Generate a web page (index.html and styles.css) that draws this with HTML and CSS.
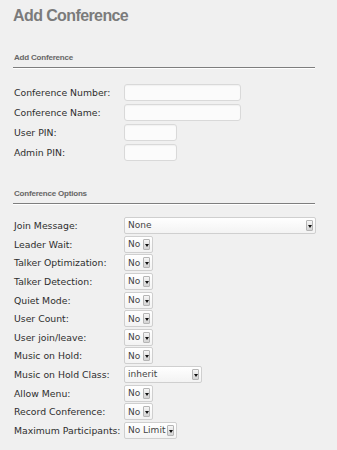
FILE: index.html
```html
<!DOCTYPE html>
<html>
<head>
<meta charset="utf-8">
<link rel="stylesheet" href="styles.css">
</head>
<body>
<div class="page">
  <h1 class="title">Add Conference</h1>

  <h2 class="section">Add Conference</h2>
  <div class="form top">
    <div class="row"><span class="lbl">Conference Number:</span><span class="inp wide"></span></div>
    <div class="row"><span class="lbl">Conference Name:</span><span class="inp wide"></span></div>
    <div class="row"><span class="lbl">User PIN:</span><span class="inp short"></span></div>
    <div class="row"><span class="lbl">Admin PIN:</span><span class="inp short"></span></div>
  </div>

  <h2 class="section">Conference Options</h2>
  <div class="form opts">
    <div class="row"><span class="lbl">Join Message:</span><div class="sel full"><span class="val">None</span><i class="arr"></i></div></div>
    <div class="row"><span class="lbl">Leader Wait:</span><div class="sel no"><span class="val">No</span><i class="arr"></i></div></div>
    <div class="row"><span class="lbl">Talker Optimization:</span><div class="sel no"><span class="val">No</span><i class="arr"></i></div></div>
    <div class="row"><span class="lbl">Talker Detection:</span><div class="sel no"><span class="val">No</span><i class="arr"></i></div></div>
    <div class="row"><span class="lbl">Quiet Mode:</span><div class="sel no"><span class="val">No</span><i class="arr"></i></div></div>
    <div class="row"><span class="lbl">User Count:</span><div class="sel no"><span class="val">No</span><i class="arr"></i></div></div>
    <div class="row"><span class="lbl">User join/leave:</span><div class="sel no"><span class="val">No</span><i class="arr"></i></div></div>
    <div class="row"><span class="lbl">Music on Hold:</span><div class="sel no"><span class="val">No</span><i class="arr"></i></div></div>
    <div class="row"><span class="lbl">Music on Hold Class:</span><div class="sel cls"><span class="val">inherit</span><i class="arr"></i></div></div>
    <div class="row"><span class="lbl">Allow Menu:</span><div class="sel no"><span class="val">No</span><i class="arr"></i></div></div>
    <div class="row"><span class="lbl">Record Conference:</span><div class="sel no"><span class="val">No</span><i class="arr"></i></div></div>
    <div class="row"><span class="lbl">Maximum Participants:</span><div class="sel lim"><span class="val">No Limit</span><i class="arr"></i></div></div>
  </div>
</div>
</body>
</html>
```

FILE: styles.css
```css
html, body {
  margin: 0;
  padding: 0;
  background: #f0f0f0;
}
.page {
  padding: 6px 22px 0 13px;
  width: 302px;
}
.title {
  margin: 0;
  font-family: "Liberation Sans", Arial, sans-serif;
  font-weight: bold;
  font-size: 16px;
  letter-spacing: -0.6px;
  line-height: 20px;
  color: #7b7b7b;
}
.section {
  margin: 0;
  font-family: "Liberation Sans", Arial, sans-serif;
  font-weight: bold;
  font-size: 8px;
  letter-spacing: -0.2px;
  line-height: 10px;
  color: #666;
  padding: 0 0 4px 1px;
  border-bottom: 1px solid #7e7e7e;
  box-shadow: 0 1px 0 #fff;
}
.page > .section:first-of-type {
  margin-top: 27px;
}
.form {
  display: flex;
  flex-direction: column;
  padding-left: 1px;
}
.form.top {
  margin-top: 14px;
  margin-bottom: 27px;
}
.form.opts {
  margin-top: 11px;
}
.row {
  display: grid;
  grid-template-columns: 110px auto;
  align-items: center;
  justify-items: start;
  height: 20px;
}
.opts .row {
  height: 18.6px;
}
.opts .row:first-child {
  height: 20px;
}
.lbl {
  font-family: "DejaVu Sans", Verdana, sans-serif;
  font-size: 9.3px;
  color: #2e2e2e;
  white-space: nowrap;
}
.inp {
  display: block;
  box-sizing: border-box;
  height: 17px;
  background: #fbfbfb;
  border: 1px solid #d9d9d9;
  border-radius: 3px;
  box-shadow: inset 0 1px 1px rgba(0,0,0,0.04);
}
.inp.wide { width: 117px; }
.inp.short { width: 53px; }
.sel {
  box-sizing: border-box;
  height: 17px;
  display: flex;
  align-items: center;
  justify-content: space-between;
  background: linear-gradient(#ffffff, #f3f3f3);
  border: 1px solid #cfcfcf;
  border-radius: 2px;
  padding: 0 2px 0 3px;
}
.sel.full { width: 192px; }
.sel.no { width: 29px; }
.sel.cls { width: 78px; }
.sel.lim { width: 53px; }
.val {
  font-family: "DejaVu Sans", Verdana, sans-serif;
  font-size: 9px;
  color: #444;
  white-space: nowrap;
}
.arr {
  position: relative;
  display: block;
  flex: none;
  box-sizing: border-box;
  width: 7px;
  height: 11px;
  background: linear-gradient(#f6f6f6, #d4d4d4);
  border: 1px solid #b5b5b5;
  border-radius: 1px;
}
.arr::after {
  content: "";
  position: absolute;
  left: 0.5px;
  top: 4px;
  width: 0;
  height: 0;
  border-left: 2px solid transparent;
  border-right: 2px solid transparent;
  border-top: 3px solid #111;
}
```
